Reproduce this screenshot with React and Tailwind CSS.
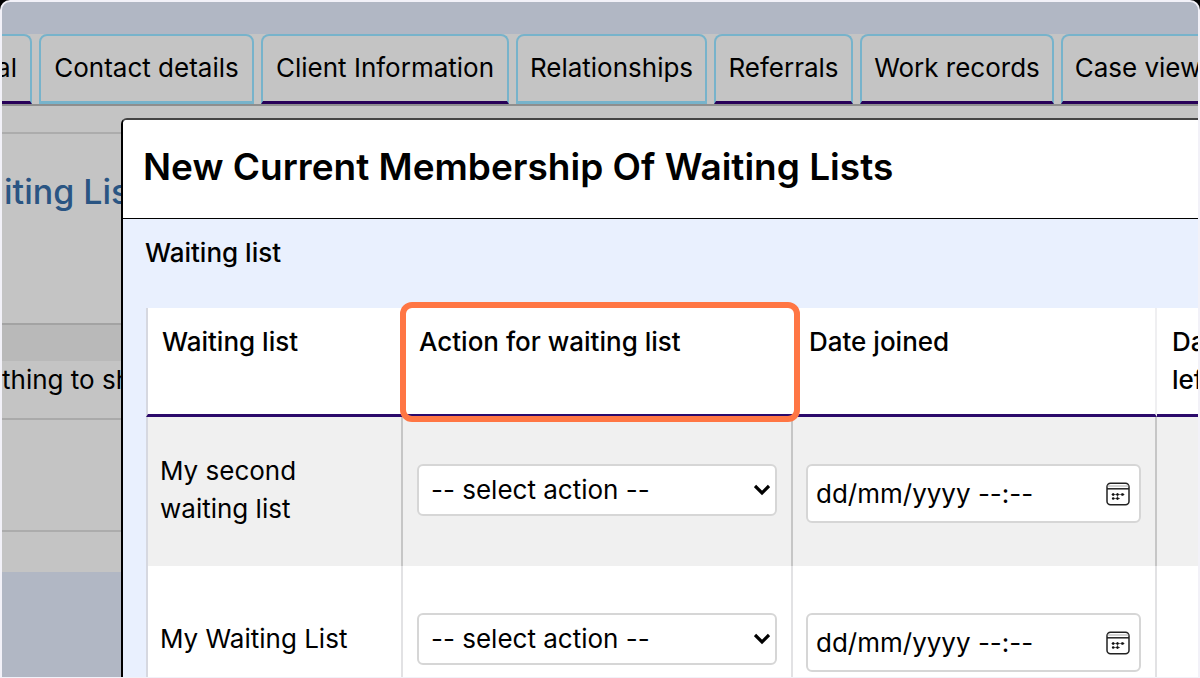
import React from "react";

const tabs = [
  { label: "Contact details", width: "w-[215px]", active: true },
  { label: "Client Information", width: "w-[248px]" },
  { label: "Relationships", width: "w-[191px]", active: true },
  { label: "Referrals", width: "w-[139px]" },
  { label: "Work records", width: "w-[194px]" },
  { label: "Case view", width: "w-[154px]" },
];

const rows = [
  { id: "second", name: "My second waiting list", shade: "bg-[#f0f0f0]", line: "border-[#c6c6c6]" },
  { id: "main", name: "My Waiting List", shade: "bg-white", line: "border-[#e2e2e4]" },
];

function Chevron() {
  return (
    <svg className="pointer-events-none absolute top-1/2 right-[7px] -mt-[6px] h-3 w-4" viewBox="0 0 16 12" fill="none" stroke="#000" strokeWidth="3.2" aria-hidden="true">
      <path d="M1 2l7 7 7-7" />
    </svg>
  );
}

function CalendarIcon() {
  return (
    <svg className="h-6 w-6" viewBox="0 0 24 24" fill="none" stroke="#222" strokeWidth="1.5" aria-hidden="true">
      <rect x="1" y="1.2" width="22" height="21.6" rx="3.5" />
      <path d="M1.5 4h21" stroke="#aaa" strokeWidth="1" />
      <path d="M1 6.8h22" />
      <path d="M5.5 12.5h13M6 16.5h8M7.2 11v3M11.5 11v7M16 11v3" stroke="#555" strokeWidth="0.8" />
      <g fill="#111" stroke="none">
        <circle cx="7.2" cy="12.5" r="1.3" />
        <circle cx="11.5" cy="12.5" r="1.3" />
        <circle cx="16.6" cy="12.5" r="1.3" />
        <circle cx="7.2" cy="16.5" r="1.3" />
        <circle cx="11.5" cy="16.5" r="1.3" />
      </g>
    </svg>
  );
}

function Tab({ label, width, active }) {
  return (
    <button
      type="button"
      className={`h-[70px] shrink-0 whitespace-nowrap rounded-t-lg border-2 border-b-[3px] border-[#77b3cb] pb-[2px] text-center ${width} ${active ? "" : "border-b-[#270058]"}`}
    >
      {label}
    </button>
  );
}

function HeaderCell({ children, className = "" }) {
  return (
    <th scope="col" className={`border-b-[3px] border-[#2b0a6b] pt-[15px] text-left align-top font-medium ${className}`}>
      {children}
    </th>
  );
}

export default function App() {
  return (
    <div className="h-screen overflow-hidden bg-black font-['Inter','Noto_Sans',sans-serif] text-[26px] leading-[38px] text-black">
      <div className="relative h-full overflow-hidden rounded-t-[10px] border-2 border-b border-[#f2f1f8] bg-[#b1b7c4]">
        <main className="mt-8 bg-[#c4c4c4] pb-10">
          <nav className="flex gap-[7px] overflow-hidden border-b-2 border-[#8e8e8e]" aria-label="Record sections">
            <button type="button" className="h-[70px] w-[30px] shrink-0 rounded-tr-lg border-t-2 border-r-2 border-b-[3px] border-[#77b3cb] border-b-[#270058] pr-[13px] pb-[2px]">
              <span className="float-right">al</span>
            </button>
            {tabs.map((tab) => (
              <Tab key={tab.label} {...tab} />
            ))}
          </nav>
          <section className="mt-[26px] border-y-2 border-[#acacac]">
            <h1 className="h-[189px] pt-[39px] pl-[2px] text-[34px] font-medium text-[#2a5583]">iting Lists</h1>
            <div className="h-[38px] border-t-2 border-[#a3a3a3] bg-[#b9b9b9]" />
            <p className="h-[59px] border-b-2 border-[#aaaaaa]">thing to show</p>
            <div className="h-[110px]" />
          </section>
        </main>

        <div role="dialog" aria-labelledby="dialog-title" className="absolute top-[116px] right-0 bottom-0 left-[119px] overflow-hidden rounded-tl-md border-t-2 border-l-2 border-t-[#444] border-l-black bg-[#e9f0fe]">
          <h2 id="dialog-title" className="h-[99px] border-b border-black bg-white pt-7 pl-5 text-[37px] font-semibold">
            New Current Membership Of Waiting Lists
          </h2>
          <p className="pt-[15px] pl-[22px] font-medium">Waiting list</p>

          <table className="mt-9 ml-[23px] w-[1120px] table-fixed border-separate border-spacing-0">
            <colgroup>
              <col className="w-[257px]" />
              <col className="w-[390px]" />
              <col className="w-[364px]" />
              <col />
            </colgroup>
            <thead>
              <tr className="h-[109px] bg-white">
                <HeaderCell className="border-l-2 border-l-[#d6d8e0] pl-[14px]">Waiting list</HeaderCell>
                <HeaderCell className="relative pl-4">
                  Action for waiting list
                  <span className="pointer-events-none absolute -top-[6px] -right-[7px] -bottom-[8px] -left-[3px] rounded-xl border-6 border-[#ff7644]" />
                </HeaderCell>
                <HeaderCell className="border-r-2 border-r-[#efeff1] pl-4">Date joined</HeaderCell>
                <HeaderCell className="pl-[15px]">
                  Date
                  <br />
                  left
                </HeaderCell>
              </tr>
            </thead>
            <tbody>
              {rows.map(({ id, name, shade, line }) => (
                <tr key={id} className={`h-[149px] ${shade}`}>
                  <td className={`border-r-2 border-l-2 border-l-[#d6d8e0] pr-8 pb-[3px] pl-3 ${line}`}>{name}</td>
                  <td className={`border-r-2 px-[14px] pb-[3px] ${line}`}>
                    <div className="relative">
                      <select aria-label={`Action for ${name}`} className="h-[52px] w-full appearance-none rounded-md border-2 border-[#d6d6d6] bg-white px-3">
                        <option>-- select action --</option>
                      </select>
                      <Chevron />
                    </div>
                  </td>
                  <td className={`border-r-2 pt-1 pr-[14px] pl-[13px] ${line}`}>
                    <div className="flex h-[59px] items-center rounded-md border-2 border-[#d6d6d6] bg-white pr-[9px] pl-2">
                      <input type="text" aria-label={`Date joined ${name}`} placeholder="dd/mm/yyyy --:--" className="w-full min-w-0 bg-transparent outline-none placeholder:text-black" />
                      <button type="button" aria-label="Open calendar" className="shrink-0">
                        <CalendarIcon />
                      </button>
                    </div>
                  </td>
                  <td />
                </tr>
              ))}
            </tbody>
          </table>
        </div>
      </div>
    </div>
  );
}
